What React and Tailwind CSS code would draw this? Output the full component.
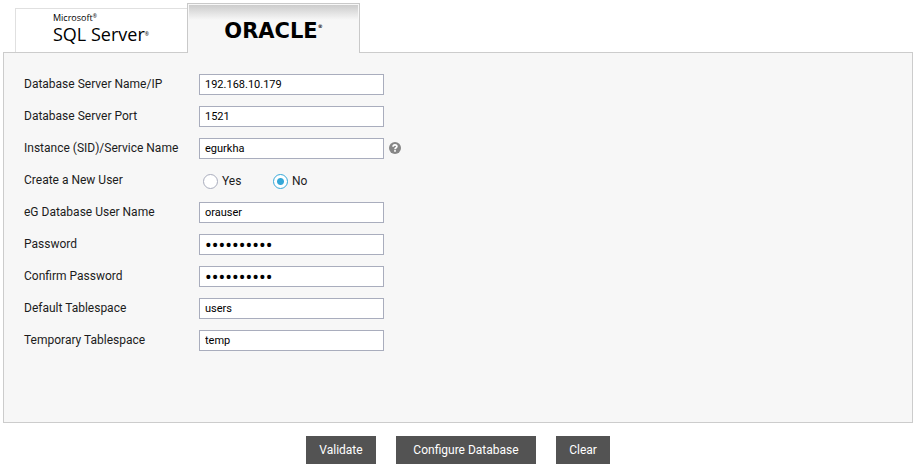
import { useState } from "react";

function Row({ label, id, children }) {
  return (
    <div className="flex h-8 items-start">
      <label htmlFor={id} className="w-[175px] shrink-0 leading-5">
        {label}
      </label>
      {children}
    </div>
  );
}

function TextField({ id, label, type = "text", value, help }) {
  const textSize = type === "password" ? "text-[20px]" : "text-[11px]";
  return (
    <Row label={label} id={id}>
      <input
        id={id}
        type={type}
        defaultValue={value}
        className={`h-[21px] w-[185px] border border-[#a9adbd] bg-white px-[5px] text-black outline-none ${textSize}`}
      />
      {help && (
        <button type="button" aria-label="Help" className="ml-[5px] mt-1">
          <svg viewBox="0 0 12 12" className="size-3">
            <circle cx="6" cy="6" r="6" fill="#868686" />
            <path d="M4.1 4.7C4.1 2.3 7.9 2.3 7.9 4.5C7.9 5.8 6 5.7 6 7.2" fill="none" stroke="#fff" strokeWidth="1.7" />
            <rect x="5.1" y="8.1" width="1.8" height="1.6" fill="#fff" />
          </svg>
        </button>
      )}
    </Row>
  );
}

function Radio({ label, checked, onChange }) {
  return (
    <label className="flex w-[70px] items-center gap-1">
      <input
        type="radio"
        name="newUser"
        checked={checked}
        onChange={onChange}
        className="size-[15px] appearance-none rounded-full border border-[#a9adbd] bg-white checked:border-[#35a8d8] checked:bg-[radial-gradient(circle,#35a8d8_3px,#fff_4px)]"
      />
      {label}
    </label>
  );
}

function ActionButton({ className, children }) {
  return (
    <button type="button" className={`h-7 bg-[#535353] text-white ${className}`}>
      {children}
    </button>
  );
}

export default function App() {
  const [newUser, setNewUser] = useState(false);
  return (
    <main className="bg-white px-[3px] pt-[3px] font-['Roboto',sans-serif] text-[12px] text-[#1c1c1c]">
      <div className="flex items-end pl-3">
        <button
          type="button"
          aria-label="Microsoft SQL Server"
          className="flex h-11 w-[172px] flex-col items-start justify-start border-l border-t border-[#e0e0e0] pl-[37px] pt-[3px] text-left font-['Open_Sans',sans-serif] text-black"
        >
          <span className="flex text-[9px] leading-3">
            Microsoft<span className="text-[5px] leading-2">®</span>
          </span>
          <span className="flex whitespace-nowrap text-[18px] leading-5">
            SQL Server<span className="text-[5px] leading-5">®</span>
          </span>
        </button>
        <button
          type="button"
          aria-label="Oracle"
          className="relative z-10 -mb-px flex h-[50px] w-[173px] items-center justify-center border border-b-0 border-[#c9c9c9] bg-[linear-gradient(#c9c9c9,#f7f7f7_16px)] pt-1 font-['DejaVu_Sans',sans-serif] text-black shadow-[inset_1px_1px_0_#f7f7f7,inset_-1px_0_0_#f7f7f7]"
        >
          <span className="flex text-[21px] font-bold leading-5">
            ORACLE<span className="text-[5px] leading-[10px]">®</span>
          </span>
        </button>
      </div>
      <form className="h-[371px] border border-[#cccccc] bg-[#f7f7f7] pl-5 pt-[21px]">
        <TextField id="host" label="Database Server Name/IP" value="192.168.10.179" />
        <TextField id="port" label="Database Server Port" value="1521" />
        <TextField id="sid" label="Instance (SID)/Service Name" value="egurkha" help />
        <div role="radiogroup" aria-label="Create a New User" className="flex h-8 items-start">
          <span className="w-[179px] leading-5">Create a New User</span>
          <div className="flex pt-[2px]">
            <Radio label="Yes" checked={newUser} onChange={() => setNewUser(true)} />
            <Radio label="No" checked={!newUser} onChange={() => setNewUser(false)} />
          </div>
        </div>
        <TextField id="user" label="eG Database User Name" value="orauser" />
        <TextField id="pw" label="Password" type="password" value="oracle1234" />
        <TextField id="pw2" label="Confirm Password" type="password" value="oracle1234" />
        <TextField id="ts" label="Default Tablespace" value="users" />
        <TextField id="temp" label="Temporary Tablespace" value="temp" />
      </form>
      <div className="flex justify-center gap-5 pt-[13px]">
        <ActionButton className="w-[70px]">Validate</ActionButton>
        <ActionButton className="w-[140px]">Configure Database</ActionButton>
        <ActionButton className="w-[54px]">Clear</ActionButton>
      </div>
    </main>
  );
}
